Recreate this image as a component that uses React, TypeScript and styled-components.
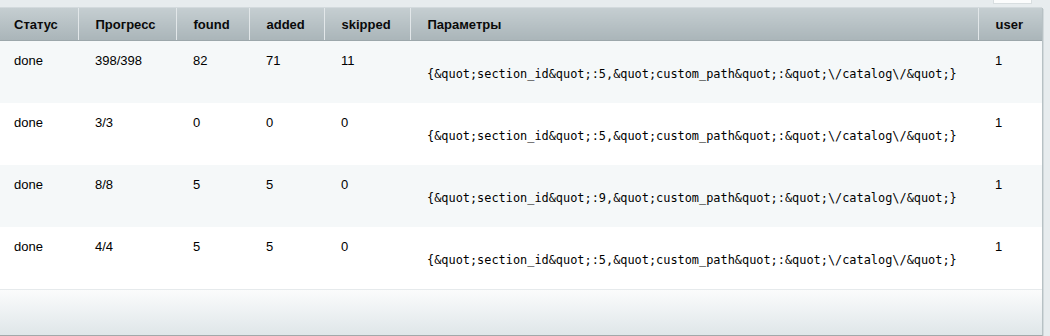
import { createGlobalStyle, styled } from "styled-components";

const GlobalStyle = createGlobalStyle`
  html, body {
    margin: 0;
    padding: 0;
    background: #e7ecee;
  }
  body {
    font-family: "Liberation Sans", Arial, sans-serif;
    font-size: 13px;
    color: #000;
  }
`;

const Page = styled.div`
  width: 1050px;
  height: 336px;
  overflow: hidden;
  background: #e7ecee;
`;

const TopBar = styled.div`
  height: 7px;
  width: 1042px;
  display: flex;
  justify-content: flex-end;
  border-bottom: 1px solid #d3dadd;
`;

const TopButton = styled.div`
  width: 37px;
  height: 3px;
  margin-right: 10px;
  background: #fbfcfc;
  border: 1px solid #d8dee0;
  border-top: none;
`;

const Panel = styled.div`
  width: 1042px;
  border-right: 1px solid #b7c1c4;
  border-bottom: 1px solid #a2a8aa;
  box-shadow: 1px 1px 0 #d2d9dc;
  background: #fff;
`;

const Table = styled.table`
  width: 1042px;
  border-collapse: collapse;
  table-layout: fixed;
`;

const HeadCell = styled.th<{ $first?: boolean }>`
  height: 32px;
  padding: 0 0 0 ${(p) => (p.$first ? "14px" : "17px")};
  text-align: left;
  font-weight: bold;
  font-size: 13px;
  color: #0a0a0a;
  background: linear-gradient(#c5ced1, #aab5b9);
  border-left: ${(p) => (p.$first ? "none" : "1px solid #e2e7e9")};
  border-bottom: 1px solid #9ca7ab;
  white-space: nowrap;
`;

const Row = styled.tr<{ $odd: boolean }>`
  background: ${(p) => (p.$odd ? "#f5f8f9" : "#ffffff")};
`;

const Cell = styled.td<{ $first?: boolean }>`
  height: 62px;
  box-sizing: border-box;
  vertical-align: top;
  padding: 12px 0 0 ${(p) => (p.$first ? "14px" : "17px")};
  line-height: 15px;
  white-space: nowrap;
`;

const ParamCell = styled(Cell)`
  padding-top: 26px;
  font-family: "DejaVu Sans Mono", "Liberation Mono", monospace;
  font-size: 11.9px;
`;

const Footer = styled.div`
  height: 45px;
  border-top: 1px solid #e6eaec;
  background: linear-gradient(#fbfcfc, #dfe6e9);
`;

const columns = [
  { title: "Статус", width: 78 },
  { title: "Прогресс", width: 98 },
  { title: "found", width: 73 },
  { title: "added", width: 75 },
  { title: "skipped", width: 86 },
  { title: "Параметры", width: 568 },
  { title: "user", width: 64 },
];

const rows = [
  { status: "done", progress: "398/398", found: 82, added: 71, skipped: 11, section: 5, user: 1 },
  { status: "done", progress: "3/3", found: 0, added: 0, skipped: 0, section: 5, user: 1 },
  { status: "done", progress: "8/8", found: 5, added: 5, skipped: 0, section: 9, user: 1 },
  { status: "done", progress: "4/4", found: 5, added: 5, skipped: 0, section: 5, user: 1 },
];

export default function App() {
  return (
    <Page>
      <GlobalStyle />
      <TopBar>
        <TopButton />
      </TopBar>
      <Panel>
        <Table>
          <colgroup>
            {columns.map((c) => (
              <col key={c.title} style={{ width: c.width }} />
            ))}
          </colgroup>
          <thead>
            <tr>
              {columns.map((c, i) => (
                <HeadCell key={c.title} $first={i === 0}>
                  {c.title}
                </HeadCell>
              ))}
            </tr>
          </thead>
          <tbody>
            {rows.map((r, i) => (
              <Row key={i} $odd={i % 2 === 0} style={{ height: i === 0 ? 61 : 62 }}>
                <Cell $first>{r.status}</Cell>
                <Cell>{r.progress}</Cell>
                <Cell>{r.found}</Cell>
                <Cell>{r.added}</Cell>
                <Cell>{r.skipped}</Cell>
                <ParamCell>
                  {`{&quot;section_id&quot;:${r.section},&quot;custom_path&quot;:&quot;\\/catalog\\/&quot;}`}
                </ParamCell>
                <Cell>{r.user}</Cell>
              </Row>
            ))}
          </tbody>
        </Table>
        <Footer />
      </Panel>
    </Page>
  );
}
